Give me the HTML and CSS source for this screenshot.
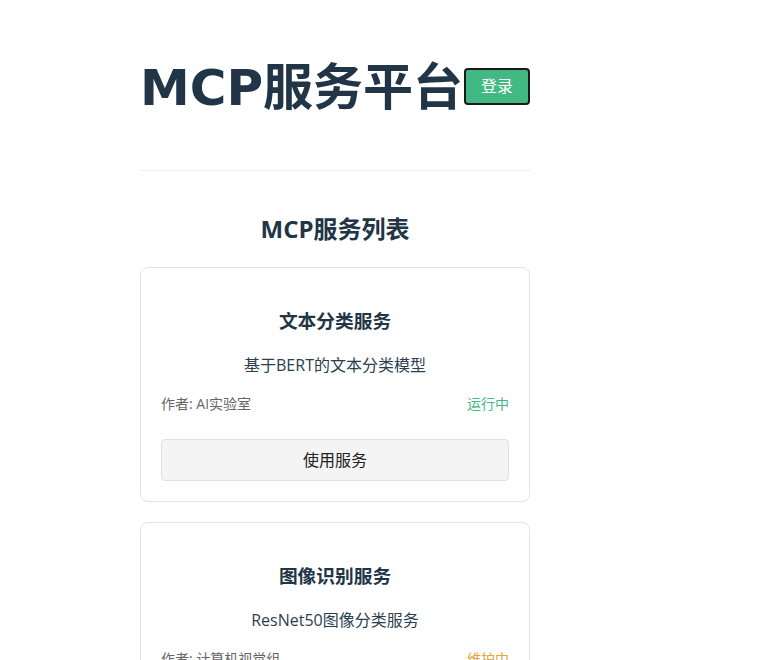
FILE: index.html
```html
<!DOCTYPE html>
<html lang="zh-CN">
<head>
<meta charset="utf-8">
<title>MCP服务平台</title>
<link rel="stylesheet" href="styles.css">
</head>
<body>
<div class="app">
  <header class="header">
    <h1 class="title">MCP服务平台</h1>
    <button class="login">登录</button>
  </header>
  <hr class="divider">
  <h2 class="section-title">MCP服务列表</h2>
  <div class="list">
    <div class="card">
      <h3 class="card-title">文本分类服务</h3>
      <p class="card-desc">基于BERT的文本分类模型</p>
      <div class="meta">
        <span class="author">作者: AI实验室</span>
        <span class="status running">运行中</span>
      </div>
      <button class="use">使用服务</button>
    </div>
    <div class="card">
      <h3 class="card-title">图像识别服务</h3>
      <p class="card-desc">ResNet50图像分类服务</p>
      <div class="meta">
        <span class="author">作者: 计算机视觉组</span>
        <span class="status maintenance">维护中</span>
      </div>
      <button class="use">使用服务</button>
    </div>
  </div>
</div>
</body>
</html>
```

FILE: styles.css
```css
html, body {
  margin: 0;
  padding: 0;
  background: #ffffff;
}
body {
  font-family: "Open Sans", "Noto Sans CJK SC", sans-serif;
  color: #2c3e50;
}
.app {
  width: 390px;
  margin-left: 140px;
  padding-top: 60px;
  text-align: center;
}
.header {
  display: flex;
  align-items: center;
  height: 56px;
}
.title {
  margin: 0;
  font-family: "DejaVu Sans", "Noto Sans CJK SC", sans-serif;
  font-size: 50px;
  line-height: 56px;
  font-weight: 700;
  color: #213547;
  white-space: nowrap;
}
.login {
  margin: 0 0 3px 1px;
  padding: 7px 15px;
  font-family: inherit;
  font-size: 16px;
  line-height: 19px;
  color: #ffffff;
  background: #42b983;
  border: 2px solid #1a1a1a;
  border-radius: 4px;
  white-space: nowrap;
}
.divider {
  margin: 54px 0 0 0;
  border: 0;
  border-top: 1px solid #eeeeee;
  height: 0;
}
.section-title {
  margin: 42px 0 22px;
  font-size: 24px;
  line-height: 32px;
  font-weight: 700;
  color: #213547;
}
.list {
  display: flex;
  flex-direction: column;
  gap: 20px;
}
.card {
  border: 1px solid #e3e3e3;
  border-radius: 8px;
  padding: 20px;
}
.card-title {
  margin: 19px 0 18px;
  font-size: 18.72px;
  line-height: 28px;
  font-weight: 700;
  color: #213547;
}
.card-desc {
  margin: 0 0 16px;
  font-size: 16px;
  line-height: 24px;
  color: #2c3e50;
}
.meta {
  display: flex;
  justify-content: space-between;
  font-size: 14px;
  line-height: 21px;
  margin-bottom: 25px;
}
.author {
  color: #666666;
}
.running {
  color: #42b983;
}
.maintenance {
  color: #e6a23c;
}
.use {
  display: block;
  width: 100%;
  padding: 10px;
  font-family: inherit;
  font-size: 16px;
  line-height: 20px;
  color: #222222;
  background: #f4f4f4;
  border: 1px solid #e0e0e0;
  border-radius: 4px;
}
```
